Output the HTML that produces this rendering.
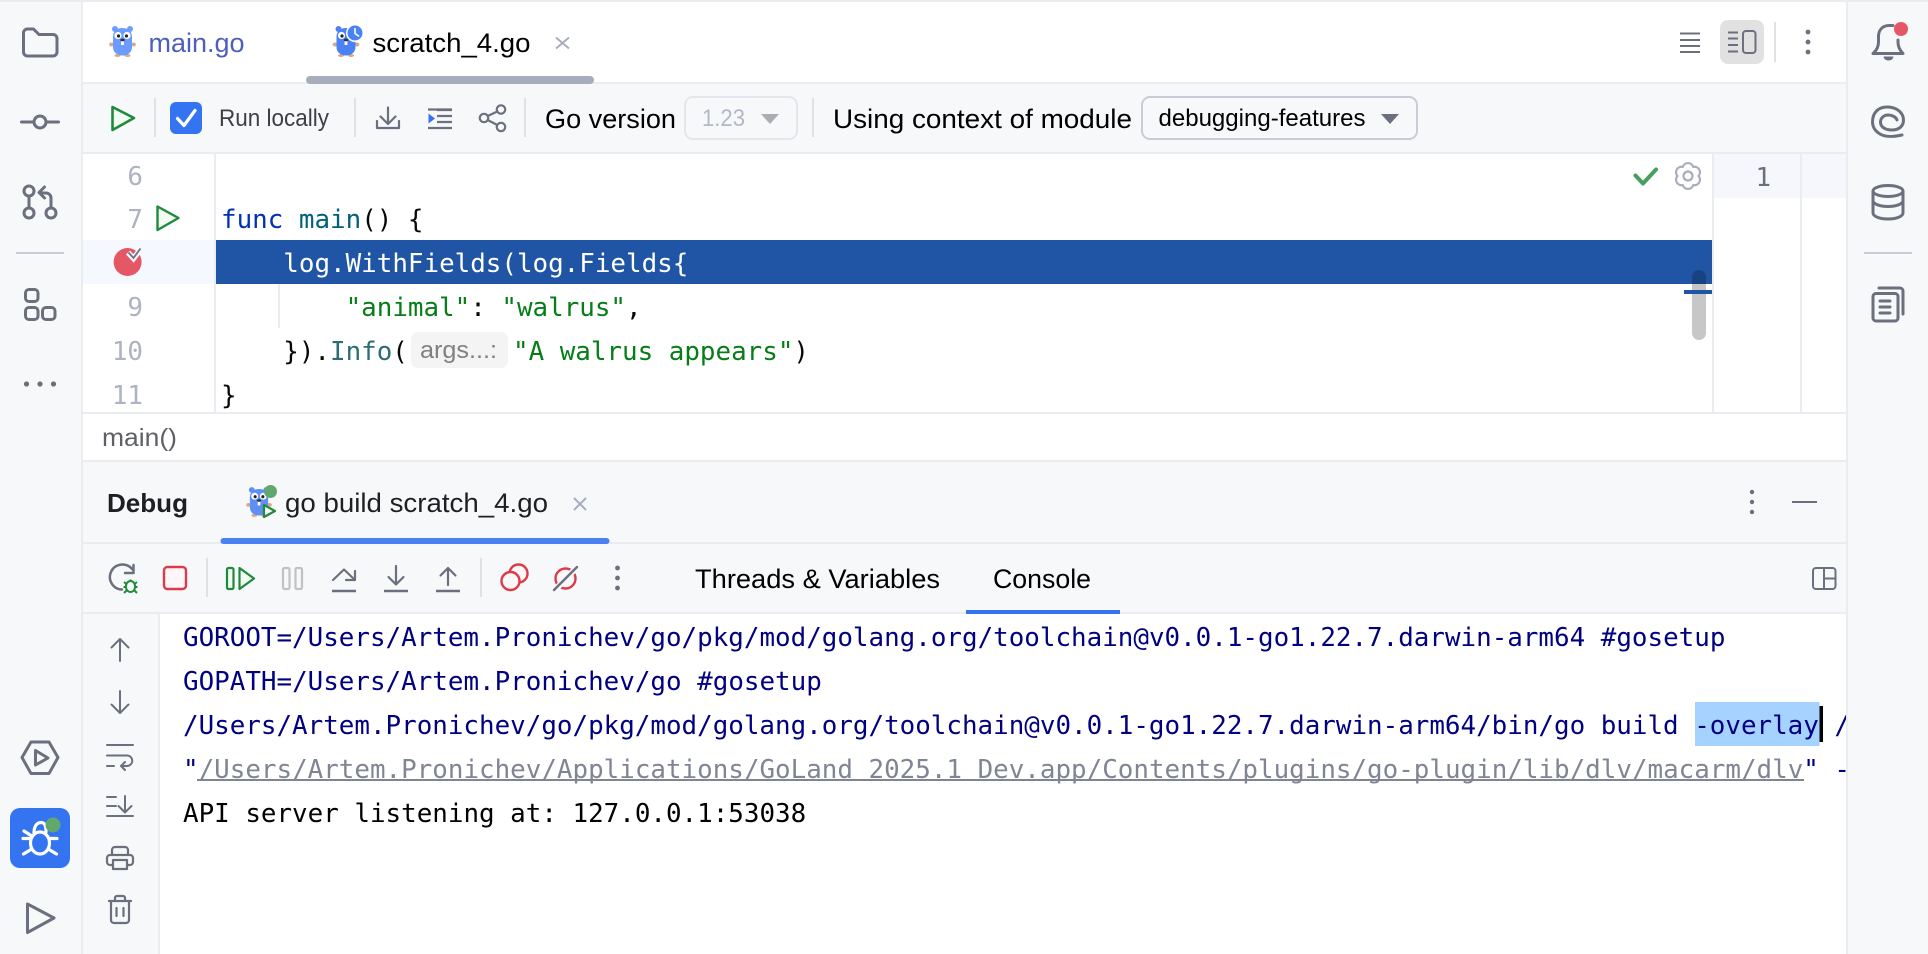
<!DOCTYPE html>
<html><head><meta charset="utf-8"><title>GoLand</title>
<style>
html,body{margin:0;padding:0;background:#fff;width:1928px;height:954px;overflow:hidden}
svg{display:block}
.m{font-family:"DejaVu Sans Mono","Liberation Mono",monospace;font-size:25.88px}
.u{font-family:"Liberation Sans",sans-serif;font-size:27px}
.i{fill:none;stroke:#6c707e;stroke-width:2.5;stroke-linecap:round;stroke-linejoin:round}
.b{fill:none;stroke:#6c707e;stroke-width:3;stroke-linecap:round;stroke-linejoin:round}
</style></head><body>
<svg width="1928" height="954" viewBox="0 0 1928 954" xmlns="http://www.w3.org/2000/svg">
<defs>
<symbol id="g" viewBox="0 0 26 32" overflow="visible">
<ellipse cx="8" cy="30.5" rx="3" ry="1.5" fill="#d9a88a"/><ellipse cx="18" cy="30.5" rx="3" ry="1.5" fill="#d9a88a"/>
<ellipse cx="2" cy="19.5" rx="2.4" ry="2" fill="#d9a88a"/><ellipse cx="24" cy="19.5" rx="2.4" ry="2" fill="#d9a88a"/>
<circle cx="5.5" cy="4" r="3" fill="currentColor"/><circle cx="20.500" cy="4" r="3" fill="currentColor"/>
<path d="M13 3C7 3 3.500 6.500 3.500 12V22C3.500 27.500 8 30.500 13 30.500S22.500 27.500 22.500 22V12C22.500 6.500 19 3 13 3Z" fill="currentColor"/>
<circle cx="8.500" cy="10.500" r="3.600" fill="#fff"/><circle cx="17.500" cy="10.500" r="3.600" fill="#fff"/>
<circle cx="9" cy="11" r="1.600" fill="#222"/><circle cx="17" cy="11" r="1.600" fill="#222"/>
<rect x="11.600" y="16" width="2.800" height="4" fill="#fff"/><ellipse cx="13" cy="15" rx="2.200" ry="1.400" fill="#333"/>
</symbol>
</defs>

<!-- backgrounds -->
<rect width="1928" height="954" fill="#fff"/>
<rect width="1928" height="2" fill="#ebecf0"/>
<rect x="82" y="84" width="1764" height="68" fill="#f7f8fa"/>
<rect x="82" y="82" width="1764" height="2" fill="#ebecf0"/>
<rect x="82" y="152" width="1764" height="2" fill="#ebecf0"/>
<rect x="82" y="412" width="1764" height="2" fill="#ebecf0"/>
<rect x="82" y="460" width="1764" height="2" fill="#ebecf0"/>
<rect x="82" y="462" width="1764" height="150" fill="#f7f8fa"/>
<rect x="82" y="542" width="1764" height="2" fill="#ebecf0"/>
<rect x="82" y="612" width="1764" height="2" fill="#ebecf0"/>
<rect x="82" y="614" width="77" height="340" fill="#f7f8fa"/>
<rect x="158" y="614" width="2" height="340" fill="#ebecf0"/>

<!-- tabs -->
<use href="#g" x="109.500" y="25" width="26" height="32" color="#6c9cff"/>
<text class="u" x="148.500" y="52" textLength="96" lengthAdjust="spacingAndGlyphs" fill="#4d5fbd">main.go</text>
<use href="#g" x="333" y="25" width="26" height="32" color="#4a82f5"/>
<circle cx="355" cy="33" r="9" fill="#fff"/><circle cx="355" cy="33" r="7.500" fill="#4a82f5"/>
<path d="M355 28.500V33.500L358.500 36" fill="none" stroke="#fff" stroke-width="1.600" stroke-linecap="round"/>
<text class="u" x="372.500" y="52" textLength="158" lengthAdjust="spacingAndGlyphs" fill="#000">scratch_4.go</text>
<path d="M556 37.500L569 48.500M569 37.500L556 48.500" stroke="#a8adbd" stroke-width="2" fill="none"/>
<rect x="306" y="76" width="288" height="8" rx="4" fill="#a8adbd"/>

<path d="M1680 33.500H1700M1680 40H1700M1680 46H1700M1680 52H1700" stroke="#6c707e" stroke-width="2" fill="none"/>
<rect x="1720" y="20" width="44" height="44" rx="8" fill="#e1e1e1"/>
<path d="M1728 32.500H1738M1728 38.500H1738M1728 45H1738M1728 51.500H1738" stroke="#6c707e" stroke-width="2" fill="none"/>
<rect x="1743" y="31" width="12.500" height="22" rx="3" fill="none" stroke="#6c707e" stroke-width="2"/>
<rect x="1774" y="22" width="2" height="40" fill="#dfe1e5"/>
<circle cx="1808" cy="32" r="2.400" fill="#6c707e"/><circle cx="1808" cy="42" r="2.400" fill="#6c707e"/><circle cx="1808" cy="52" r="2.400" fill="#6c707e"/>

<!-- toolbar -->
<path d="M112.500 107L134 118L112.500 130Z" fill="#f2fcf3" stroke="#208a3c" stroke-width="2.600" stroke-linejoin="round"/>
<rect x="154" y="98" width="2" height="39" fill="#dfe1e5"/>
<rect x="170" y="102" width="32" height="32" rx="6" fill="#3574f0"/>
<path d="M177.500 118.500L184 125.500L195 110.500" fill="none" stroke="#fff" stroke-width="3.200" stroke-linecap="round" stroke-linejoin="round"/>
<text class="u" x="219" y="126" textLength="110" lengthAdjust="spacingAndGlyphs" style="font-size:24px" fill="#3f4046">Run locally</text>
<rect x="354" y="98" width="2" height="39" fill="#dfe1e5"/>
<path class="i" style="stroke-width:2.200" d="M388 107.500V123.500M380.500 116.500L388 124L395.500 116.500M377 121V128H399V121"/>
<path d="M437 110H452M437 116H452M437 122H452M428 109.500H452M428 128H452" stroke="#6c707e" stroke-width="2.200" fill="none"/>
<path d="M428.500 113.500L435 118.500L428.500 123.500Z" fill="#3574f0"/>
<g class="i" style="stroke-width:2.200"><circle cx="501" cy="109.500" r="4.200"/><circle cx="501" cy="127" r="4.200"/><circle cx="484" cy="118" r="4.200"/>
<path d="M497.300 111.500L487.700 116M497.300 125L487.700 120"/></g>
<rect x="524" y="98" width="2" height="39" fill="#dfe1e5"/>
<text class="u" x="545" y="128" textLength="131" lengthAdjust="spacingAndGlyphs" fill="#000">Go version</text>
<rect x="685" y="97" width="112" height="42" rx="8" fill="#f7f8fa" stroke="#e4e6ec" stroke-width="2"/>
<text class="u" x="702" y="126" textLength="43" lengthAdjust="spacingAndGlyphs" style="font-size:24px" fill="#b4b8c6">1.23</text>
<path d="M761 114H779L770 124Z" fill="#aaadb2"/>
<rect x="812" y="98" width="2" height="39" fill="#dfe1e5"/>
<text class="u" x="833" y="128" textLength="299" lengthAdjust="spacingAndGlyphs" fill="#000">Using context of module</text>
<rect x="1142" y="97" width="275" height="42" rx="8" fill="#f7f8fa" stroke="#c9ccd6" stroke-width="2"/>
<text class="u" x="1158.500" y="126" textLength="207" lengthAdjust="spacingAndGlyphs" style="font-size:24px" fill="#000">debugging-features</text>
<path d="M1381 114H1399L1390 124Z" fill="#6c707e"/>

<!-- editor -->
<rect x="82" y="240" width="132" height="44" fill="#f5f8fe"/>
<rect x="214" y="154" width="2" height="258" fill="#ebecf0"/>
<rect x="216" y="240" width="1496" height="44" fill="#2055a6"/>
<rect x="278" y="284" width="2" height="44" fill="#ebecf0"/>
<g class="m" fill="#aeb3c2" text-anchor="end">
<text x="143" y="185">6</text><text x="143" y="228">7</text><text x="143" y="316">9</text><text x="143" y="360">10</text><text x="143" y="404">11</text>
</g>
<path d="M157.500 206.500L178.500 218L157.500 230Z" fill="#f2fcf3" stroke="#208a3c" stroke-width="2.400" stroke-linejoin="round"/>
<circle cx="127.600" cy="262" r="14" fill="#e55765"/>
<path d="M128 252.500L133.500 258.500L141 248.500" fill="none" stroke="#f5f8fe" stroke-width="5.500"/>
<path d="M128.500 252.500L133.500 258L140.500 248.500" fill="none" stroke="#6c707e" stroke-width="1.800"/>

<g class="m">
<text x="221" y="228" textLength="62.300" lengthAdjust="spacingAndGlyphs" fill="#0033b3">func</text>
<text x="298.900" y="228" textLength="62.300" lengthAdjust="spacingAndGlyphs" fill="#00627a">main</text>
<text x="361.200" y="228" textLength="62.300" fill="#080808">() {</text>
<text x="283.300" y="272" textLength="405" lengthAdjust="spacingAndGlyphs" fill="#fff">log.WithFields(log.Fields{</text>
<text x="345.600" y="316" textLength="124.600" lengthAdjust="spacingAndGlyphs" fill="#067d17">"animal"</text>
<text x="470.200" y="316" fill="#080808">:</text>
<text x="501.400" y="316" textLength="124.600" lengthAdjust="spacingAndGlyphs" fill="#067d17">"walrus"</text>
<text x="626" y="316" fill="#080808">,</text>
<text x="283.300" y="360" textLength="46.700" lengthAdjust="spacingAndGlyphs" fill="#080808">}).</text>
<text x="330" y="360" textLength="62.300" lengthAdjust="spacingAndGlyphs" fill="#2d6d78">Info</text>
<text x="392.300" y="360" fill="#080808">(</text>
<text x="513" y="360" textLength="280.400" lengthAdjust="spacingAndGlyphs" fill="#067d17">"A walrus appears"</text>
<text x="793.400" y="360" fill="#080808">)</text>
<text x="221" y="404" fill="#080808">}</text>
</g>
<rect x="411" y="332" width="97" height="36" rx="7" fill="#f4f4f4"/>
<text class="u" x="420" y="358" textLength="77" lengthAdjust="spacingAndGlyphs" style="font-size:24px" fill="#808080">args...:</text>

<path d="M1635.500 175.500L1643 183.500L1656 169.500" fill="none" stroke="#45a05f" stroke-width="4" stroke-linecap="round" stroke-linejoin="round"/>
<path d="M1693.250 166.900A5.500 5.500 0 0 1 1698.500 176A5.500 5.500 0 0 1 1693.250 185.100A5.500 5.500 0 0 1 1682.750 185.100A5.500 5.500 0 0 1 1677.500 176A5.500 5.500 0 0 1 1682.750 166.900A5.500 5.500 0 0 1 1693.250 166.900Z" fill="none" stroke="#a8adbd" stroke-width="2.200" stroke-linejoin="round"/>
<circle cx="1688" cy="176" r="4.500" fill="none" stroke="#a8adbd" stroke-width="2.200"/>

<rect x="1692" y="270" width="14" height="70" rx="7" fill="#000" fill-opacity=".22"/>
<rect x="1684" y="290" width="28" height="4" fill="#2055a6"/>
<rect x="1714" y="154" width="132" height="44" fill="#f5f7fc"/>
<rect x="1712" y="154" width="2" height="258" fill="#ebecf0"/>
<rect x="1800" y="154" width="2" height="258" fill="#ebecf0"/>
<text class="m" x="1755.500" y="186" fill="#6c707e">1</text>

<text class="u" x="102" y="446" textLength="75" lengthAdjust="spacingAndGlyphs" style="font-size:25px" fill="#5e6066">main()</text>

<!-- debug header -->
<text class="u" x="107" y="512" textLength="81" lengthAdjust="spacingAndGlyphs" font-weight="700" style="font-size:26px" fill="#1e1f22">Debug</text>
<use href="#g" x="246.500" y="486" width="25" height="31" color="#5f8ff5"/>
<circle cx="270.500" cy="491.500" r="6.500" fill="#62a86e"/>
<path d="M264 505L275 511L264 517Z" fill="#f7f8fa" stroke="#208a3c" stroke-width="2.200" stroke-linejoin="round"/>
<text class="u" x="285" y="512" textLength="263" lengthAdjust="spacingAndGlyphs" fill="#1e1f22">go build scratch_4.go</text>
<path d="M574 498L586 510M586 498L574 510" stroke="#a8adbd" stroke-width="2" fill="none"/>
<rect x="220.500" y="538" width="389" height="6" rx="3" fill="#4a81f0"/>
<circle cx="1752" cy="492" r="2.200" fill="#6c707e"/><circle cx="1752" cy="502" r="2.200" fill="#6c707e"/><circle cx="1752" cy="512" r="2.200" fill="#6c707e"/>
<path d="M1792 502H1817" stroke="#6c707e" stroke-width="2" fill="none"/>

<!-- debug toolbar -->
<path class="i" d="M132 569A12.500 12.500 0 1 0 122 589.500M133.500 565V573H125"/>
<g fill="none" stroke="#208a3c" stroke-width="2">
<ellipse cx="130.500" cy="586.500" rx="4.600" ry="5.500" fill="#f7f8fa"/>
<path d="M130.500 579.500V581M124 582L126.500 584M137 582L134.500 584M123.500 587H126M137.500 587H135M124 593L126.500 590.500M137 593L134.500 590.500"/>
</g>
<rect x="164" y="567" width="22" height="22" rx="3.500" fill="#fff7f7" stroke="#db3b4b" stroke-width="2.400"/>
<rect x="206" y="558" width="2" height="39" fill="#dfe1e5"/>
<rect x="227" y="568" width="6.500" height="21" rx="1.500" fill="#f2fcf3" stroke="#208a3c" stroke-width="2.200"/>
<path d="M239.500 568L254 578.500L239.500 589Z" fill="#f2fcf3" stroke="#208a3c" stroke-width="2.200" stroke-linejoin="round"/>
<rect x="283" y="568" width="6.500" height="21" rx="1.500" fill="none" stroke="#c2c2c2" stroke-width="2.200"/>
<rect x="295.500" y="568" width="6.500" height="21" rx="1.500" fill="none" stroke="#c2c2c2" stroke-width="2.200"/>
<path class="i" d="M333 580L344 569.500L355 580M355 571V580H346" style="stroke-width:2.200"/>
<path d="M332 591H356" stroke="#6c707e" stroke-width="2.400" fill="none"/>
<path class="i" d="M396 566V584M388.500 577L396 584.500L403.500 577" style="stroke-width:2.200"/>
<path d="M384 591H408" stroke="#6c707e" stroke-width="2.400" fill="none"/>
<path class="i" d="M448 568V585M440.500 575.500L448 568L455.500 575.500" style="stroke-width:2.200"/>
<path d="M436 591H460" stroke="#6c707e" stroke-width="2.400" fill="none"/>
<rect x="480" y="558" width="2" height="39" fill="#dfe1e5"/>
<circle cx="518.500" cy="573.500" r="9" fill="#fff7f7" stroke="#db3b4b" stroke-width="2.400"/>
<circle cx="510.500" cy="581" r="9" fill="#fff7f7" stroke="#db3b4b" stroke-width="2.400"/>
<circle cx="565.500" cy="578.500" r="10" fill="#fff7f7" stroke="#db3b4b" stroke-width="2.400"/>
<path d="M553 592L578 566" stroke="#f7f8fa" stroke-width="6" fill="none"/>
<path d="M554 590L577 567" stroke="#6c707e" stroke-width="2.400" fill="none" stroke-linecap="round"/>
<circle cx="617.500" cy="568" r="2.400" fill="#6c707e"/><circle cx="617.500" cy="578" r="2.400" fill="#6c707e"/><circle cx="617.500" cy="588" r="2.400" fill="#6c707e"/>
<text class="u" x="695" y="588" textLength="245" lengthAdjust="spacingAndGlyphs" fill="#000">Threads &amp; Variables</text>
<text class="u" x="993" y="588" textLength="98" lengthAdjust="spacingAndGlyphs" fill="#000">Console</text>
<rect x="966" y="610" width="154" height="4" fill="#3574f0"/>
<rect x="1813" y="568" width="22.500" height="21" rx="3" fill="none" stroke="#6c707e" stroke-width="2"/>
<path d="M1824 568V589M1824 578.500H1836" stroke="#6c707e" stroke-width="2" fill="none"/>

<!-- console gutter -->
<path class="i" d="M120 639V661M111.500 647.500L120 639L128.500 647.500" style="stroke-width:2"/>
<path class="i" d="M120 691V713M111.500 704.500L120 713L128.500 704.500" style="stroke-width:2"/>
<path class="i" d="M107 745H133M107 755.500H127A5.200 5.200 0 0 1 127 766H121M125 762L121 766L125 770M107 766H114" style="stroke-width:2"/>
<path class="i" d="M107 797H116M107 806H116M125 796V812M118.500 806L125 812.500L131.500 806M107 816H133" style="stroke-width:2"/>
<path class="i" d="M112 855V850A3 3 0 0 1 115 847H125A3 3 0 0 1 128 850V855M113 865H110A3 3 0 0 1 107 862V858A3 3 0 0 1 110 855H130A3 3 0 0 1 133 858V862A3 3 0 0 1 130 865H127M113 860H127V869H113Z" style="stroke-width:2.200"/>
<path class="i" d="M109 901H131M115 900V898A2 2 0 0 1 117 896H123A2 2 0 0 1 125 898V900M111 901V920A3 3 0 0 0 114 923H126A3 3 0 0 0 129 920V901M116.500 908V916M123.500 908V916" style="stroke-width:2.200"/>

<!-- console text -->
<rect x="1695" y="702" width="124.500" height="44" fill="#a6d2ff"/>
<g class="m" fill="#000080">
<text x="183" y="646" textLength="1542.400" lengthAdjust="spacingAndGlyphs">GOROOT=/Users/Artem.Pronichev/go/pkg/mod/golang.org/toolchain@v0.0.1-go1.22.7.darwin-arm64 #gosetup</text>
<text x="183" y="690" textLength="638.800" lengthAdjust="spacingAndGlyphs">GOPATH=/Users/Artem.Pronichev/go #gosetup</text>
<text x="183" y="734" textLength="1667" lengthAdjust="spacingAndGlyphs">/Users/Artem.Pronichev/go/pkg/mod/golang.org/toolchain@v0.0.1-go1.22.7.darwin-arm64/bin/go build -overlay /</text>
<text x="183" y="778">"</text>
<text x="198.600" y="778" textLength="1604.700" lengthAdjust="spacingAndGlyphs" fill="#808594">/Users/Artem.Pronichev/Applications/GoLand 2025.1 Dev.app/Contents/plugins/go-plugin/lib/dlv/macarm/dlv</text>
<text x="1803.300" y="778" textLength="46.700">" -</text>
<text x="183" y="822" textLength="623.200" lengthAdjust="spacingAndGlyphs" fill="#000">API server listening at: 127.0.0.1:53038</text>
</g>
<rect x="197" y="779" width="1607" height="2" fill="#808594"/>
<rect x="1819.500" y="706" width="3.500" height="36" fill="#000"/>

<!-- left stripe -->
<rect x="0" y="2" width="81" height="952" fill="#f7f8fa"/>
<rect x="81" y="2" width="2" height="952" fill="#ebecf0"/>
<path class="b" d="M23.500 33A4 4 0 0 1 27.500 29H33.500L39 34.500H53A4 4 0 0 1 57 38.500V52A4 4 0 0 1 53 56H27.500A4 4 0 0 1 23.500 52Z"/>
<circle class="b" cx="40" cy="122" r="6"/><path class="b" d="M21.500 122H34M46 122H58.500"/>
<circle class="b" cx="29" cy="191" r="5"/><circle class="b" cx="29" cy="213" r="5"/><circle class="b" cx="51" cy="213" r="5"/>
<path class="b" d="M29 196V208M51 208V198A5 5 0 0 0 46 193H40M44.500 187L39 192.500L44.500 198"/>
<rect x="16" y="252" width="48" height="2" fill="#c9ccd6"/>
<rect class="b" x="25.500" y="289.500" width="12.500" height="12" rx="3.500"/>
<rect class="b" x="25.500" y="307.500" width="12.500" height="12" rx="3.500"/>
<rect class="b" x="42.500" y="307.500" width="12.500" height="12" rx="3.500"/>
<circle cx="26.500" cy="384" r="2.600" fill="#6c707e"/><circle cx="40" cy="384" r="2.600" fill="#6c707e"/><circle cx="53.500" cy="384" r="2.600" fill="#6c707e"/>
<path class="b" d="M22 757.500L31 742H49L58 757.500L49 773.500H31Z"/>
<path class="b" d="M35.500 750.500V765L48 758Z"/>
<rect x="10" y="808" width="60" height="60" rx="10" fill="#3574f0"/>
<g fill="none" stroke="#fff" stroke-width="3.200" stroke-linecap="round">
<ellipse cx="40" cy="843" rx="9.500" ry="11"/>
<path d="M34 833C34 826 37 822.500 41 822.500C45 822.500 46 826 46 832M23 838.500H30.500M49.500 838.500H57M24 831L31 835.500M23.500 854L31 849.500M56.500 854L49 849.500"/>
</g>
<circle cx="53" cy="825" r="7.500" fill="#62a86e"/>
<path class="b" d="M27.500 904L54 918L27.500 932.500Z"/>

<!-- right stripe -->
<rect x="1846" y="2" width="82" height="952" fill="#f7f8fa"/>
<rect x="1846" y="2" width="2" height="952" fill="#ebecf0"/>
<path class="b" d="M1873 53.500C1876 51 1878.500 47 1878.500 42V36.500C1878.500 29.500 1883 25.500 1889 25.500H1893M1898 40V42C1898 47 1900.500 51 1903 53.500H1873"/>
<path d="M1883.500 56.500H1893.500A5 4 0 0 1 1883.500 56.500Z" fill="#6c707e"/>
<circle cx="1901" cy="29" r="7" fill="#e55765"/>
<path class="b" d="M1902 135C1893 137 1885 137 1880 134C1875 131 1872.500 127 1872.500 122C1872.500 112 1879 107 1887 107C1897 107 1903.500 113 1903.500 120C1903.500 127 1898 130 1892 130C1885 130 1880.500 127 1880.500 122C1880.500 118 1884 115 1888 115C1892 115 1896 117 1897 120"/>
<ellipse class="b" cx="1888" cy="191" rx="15" ry="5.500"/>
<path class="b" d="M1873 191V213C1873 216.500 1880 219 1888 219S1903 216.500 1903 213V191M1873 200.500C1873 204 1880 206.500 1888 206.500S1903 204 1903 200.500"/>
<rect x="1864" y="252" width="48" height="2" fill="#c9ccd6"/>
<rect class="b" x="1873" y="293.500" width="25" height="27.500" rx="3"/>
<path class="b" d="M1879 288H1900A3 3 0 0 1 1903 291V314"/>
<path class="b" d="M1880 301H1890M1880 307H1890M1880 313H1890"/>
</svg>
</body></html>
